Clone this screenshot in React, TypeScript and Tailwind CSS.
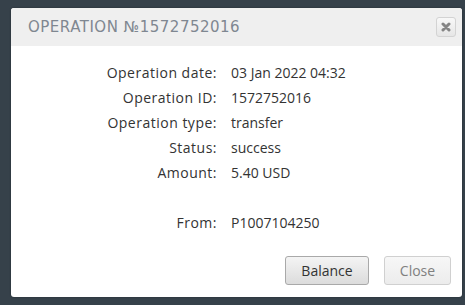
import React from 'react';

const rows: [string, string][] = [
  ['Operation date:', '03 Jan 2022 04:32'],
  ['Operation ID:', '1572752016'],
  ['Operation type:', 'transfer'],
  ['Status:', 'success'],
  ['Amount:', '5.40 USD'],
];

const App: React.FC = () => {
  return (
    <div className="w-[465px] h-[305px] bg-[#36414a] pt-[8px] pl-[11px] overflow-hidden">
      <div className="w-[451px] h-[289px] bg-white rounded-[3px] overflow-hidden flex flex-col shadow-[0_0_2px_rgba(0,0,0,0.4)]">
        <div className="h-[38px] bg-[#efefef] flex items-center justify-between pl-[17px] pr-[6px]">
          <h1
            className="text-[15px] text-[#7f8791] tracking-[0.5px] pt-[1px]"
            style={{ fontFamily: '"DejaVu Sans", sans-serif' }}
          >
            OPERATION №1572752016
          </h1>
          <button className="w-[20px] h-[20px] rounded-[3px] border border-[#d3d3d3] bg-gradient-to-b from-[#f8f8f8] to-[#e6e6e6] flex items-center justify-center">
            <svg width="10" height="10" viewBox="0 0 10 10">
              <path d="M2 2 L8 8 M8 2 L2 8" stroke="#858585" strokeWidth="3" strokeLinecap="round" />
            </svg>
          </button>
        </div>
        <div
          className="flex-1 flex flex-col text-[14px] text-[#333]"
          style={{ fontFamily: '"Open Sans", sans-serif' }}
        >
          <div className="pt-[14px] flex flex-col">
            {rows.map(([label, value]) => (
              <div key={label} className="flex h-[25px] items-center">
                <div className="w-[206px] text-right tracking-[0.5px]">{label}</div>
                <div className="pl-[14px]">{value}</div>
              </div>
            ))}
            <div className="h-[25px]" />
            <div className="flex h-[25px] items-center">
              <div className="w-[206px] text-right tracking-[0.5px]">From:</div>
              <div className="pl-[14px]">P1007104250</div>
            </div>
          </div>
          <div className="mt-auto flex justify-end gap-[15px] pr-[11px] pb-[12px]">
            <button className="w-[84px] h-[29px] rounded-[3px] border border-[#a9a9a9] bg-gradient-to-b from-[#f4f4f4] to-[#dcdcdc] text-[14px] text-[#333]">
              Balance
            </button>
            <button className="w-[67px] h-[29px] rounded-[3px] border border-[#d0d0d0] bg-gradient-to-b from-[#f7f7f7] to-[#ececec] text-[14px] text-[#808080]">
              Close
            </button>
          </div>
        </div>
      </div>
    </div>
  );
};

export default App;
